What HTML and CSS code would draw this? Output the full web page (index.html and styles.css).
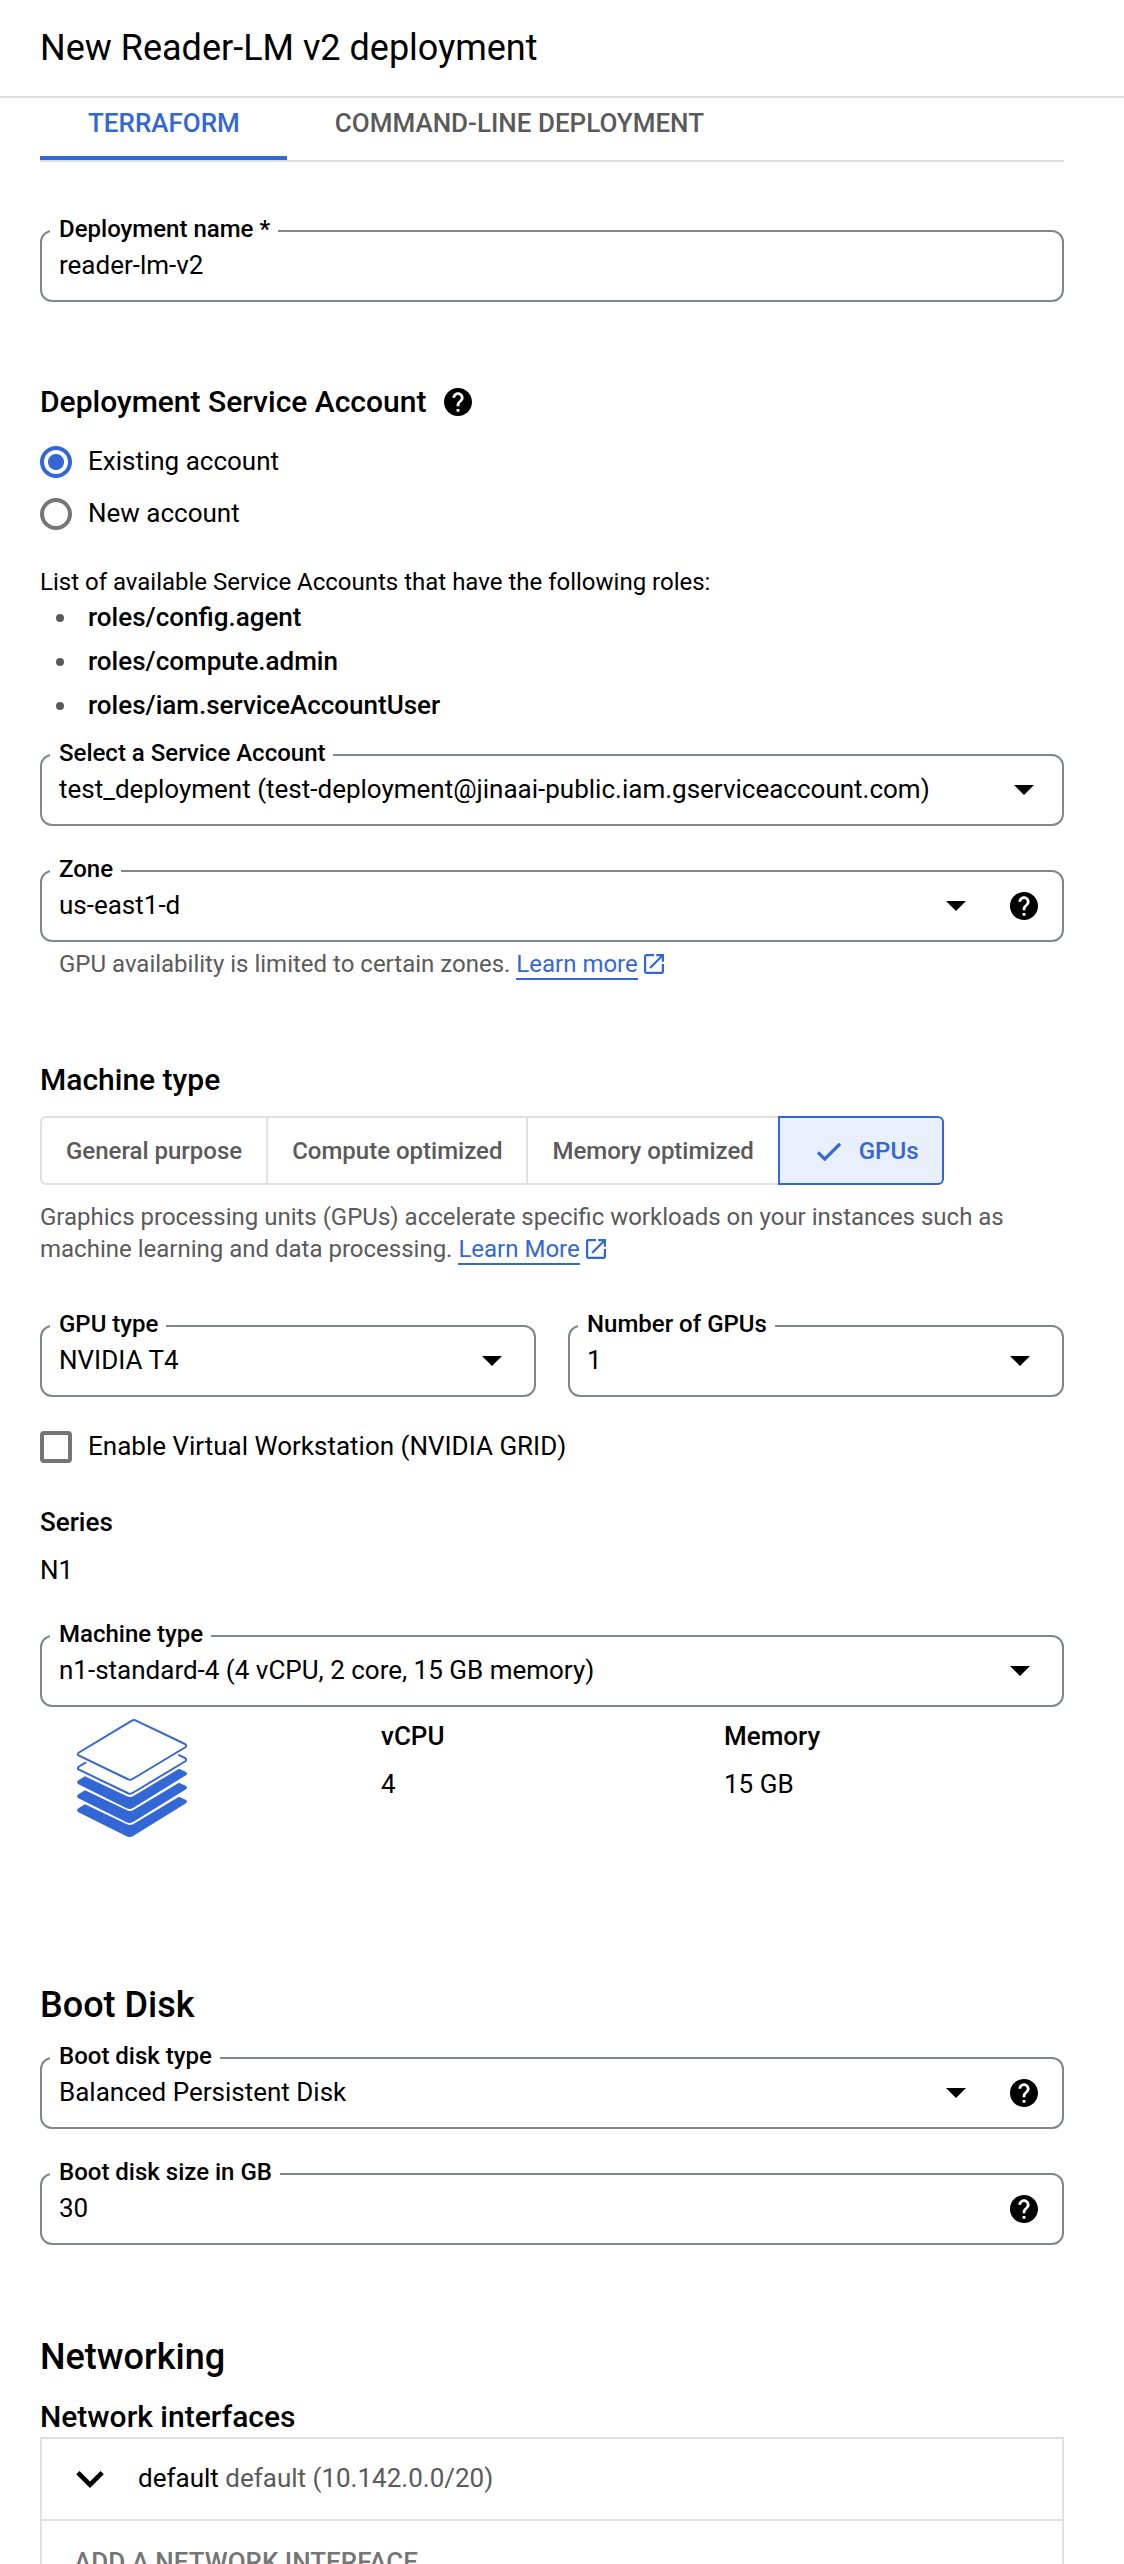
FILE: index.html
```
<!DOCTYPE html>
<html lang="en">
<head>
<meta charset="utf-8">
<title>New Reader-LM v2 deployment</title>
<link rel="stylesheet" href="styles.css">
</head>
<body>
<svg class="defs" aria-hidden="true">
  <symbol id="help" viewBox="2 2 20 20"><path d="M12 2C6.48 2 2 6.48 2 12s4.48 10 10 10 10-4.48 10-10S17.52 2 12 2zm1 17h-2v-2h2v2zm2.07-7.75l-.9.92C13.45 12.9 13 13.5 13 15h-2v-.5c0-1.1.45-2.1 1.17-2.83l1.24-1.26c.37-.36.59-.86.59-1.41 0-1.1-.9-2-2-2s-2 .9-2 2H8c0-2.21 1.79-4 4-4s4 1.79 4 4c0 .88-.36 1.68-.93 2.25z"/></symbol>
  <symbol id="arrow" viewBox="0 0 20 10"><path d="M0 0h20L10 10z"/></symbol>
  <symbol id="external" viewBox="3 3 18 18"><path d="M19 19H5V5h7V3H5c-1.11 0-2 .9-2 2v14c0 1.1.89 2 2 2h14c1.1 0 2-.9 2-2v-7h-2v7zM14 3v2h3.59l-9.83 9.83 1.41 1.41L19 6.41V10h2V3h-7z"/></symbol>
</svg>

<header class="page-header"><h1>New Reader-LM v2 deployment</h1></header>

<main>
  <nav class="tabs">
    <a class="tab active">TERRAFORM</a>
    <a class="tab">COMMAND-LINE DEPLOYMENT</a>
  </nav>

  <div class="field name-field">
    <span class="label">Deployment name *</span>
    <span class="value">reader-lm-v2</span>
  </div>

  <h3>Deployment Service Account <svg class="help"><use href="#help"/></svg></h3>
  <div class="option"><span class="radio checked"></span><span>Existing account</span></div>
  <div class="option"><span class="radio"></span><span>New account</span></div>

  <p class="roles-intro">List of available Service Accounts that have the following roles:</p>
  <ul class="roles">
    <li>roles/config.agent</li>
    <li>roles/compute.admin</li>
    <li>roles/iam.serviceAccountUser</li>
  </ul>

  <div class="field account-field">
    <span class="label">Select a Service Account</span>
    <span class="value">test_deployment (test-deployment@jinaai-public.iam.gserviceaccount.com)</span>
    <svg class="arrow"><use href="#arrow"/></svg>
  </div>
  <div class="field with-help stacked">
    <span class="label">Zone</span>
    <span class="value">us-east1-d</span>
    <svg class="arrow"><use href="#arrow"/></svg>
    <svg class="help"><use href="#help"/></svg>
  </div>
  <p class="hint field-hint">GPU availability is limited to certain zones. <a>Learn more</a><svg class="external"><use href="#external"/></svg></p>

  <h3>Machine type</h3>
  <div class="toggle">
    <span class="toggle-item">General purpose</span>
    <span class="toggle-item">Compute optimized</span>
    <span class="toggle-item">Memory optimized</span>
    <span class="toggle-item selected"><svg class="check" viewBox="3.41 5.59 17.59 13.41"><path d="M9 16.17L4.83 12l-1.42 1.41L9 19 21 7l-1.41-1.41z"/></svg>GPUs</span>
  </div>
  <p class="hint machine-hint">Graphics processing units (GPUs) accelerate specific workloads on your instances such as machine learning and data processing. <a>Learn More</a><svg class="external"><use href="#external"/></svg></p>

  <div class="gpu-row">
    <div class="field">
      <span class="label">GPU type</span>
      <span class="value">NVIDIA T4</span>
      <svg class="arrow"><use href="#arrow"/></svg>
    </div>
    <div class="field">
      <span class="label">Number of GPUs</span>
      <span class="value">1</span>
      <svg class="arrow"><use href="#arrow"/></svg>
    </div>
  </div>

  <div class="option workstation"><span class="checkbox"></span><span>Enable Virtual Workstation (NVIDIA GRID)</span></div>

  <dl class="spec series"><dt>Series</dt><dd>N1</dd></dl>

  <div class="field machine-field">
    <span class="label">Machine type</span>
    <span class="value">n1-standard-4 (4 vCPU, 2 core, 15 GB memory)</span>
    <svg class="arrow"><use href="#arrow"/></svg>
  </div>
  <div class="machine-specs">
    <svg class="layers" viewBox="0 0 112 120">
      <g fill="none" stroke="#3367d6" stroke-width="2" stroke-linecap="round" stroke-linejoin="round">
        <path d="M55.5 2.8Q58 1.4 60.5 2.8L109 26Q111.400 27.800 109 29.500L56.500 61Q54 62.500 51.500 61L3 37.700Q.8 36.200 3 34.500Z"/>
        <path d="M9.500 44.700L3 48.500Q.8 50.200 3 51.700L51.500 75Q54 76.500 56.500 75L109 43.500Q111.400 41.800 109 40L103 37.200"/>
      </g>
      <g fill="#3367d6">
        <path id="slab" d="M9 58.300L51 78.300Q54 79.500 57 78.300L103 50.700L109.600 53.800Q112.400 55.300 109.600 57.400L57.500 89.700Q54 92 50.500 90.200L2.400 66.300Q-.2 64.300 2.400 62.300Z"/>
        <use href="#slab" y="14"/>
        <use href="#slab" y="28"/>
      </g>
    </svg>
    <dl class="spec"><dt>vCPU</dt><dd>4</dd></dl>
    <dl class="spec"><dt>Memory</dt><dd>15 GB</dd></dl>
  </div>

  <h2 class="boot-title">Boot Disk</h2>
  <div class="field with-help boot-field">
    <span class="label">Boot disk type</span>
    <span class="value">Balanced Persistent Disk</span>
    <svg class="arrow"><use href="#arrow"/></svg>
    <svg class="help"><use href="#help"/></svg>
  </div>
  <div class="field with-help stacked">
    <span class="label">Boot disk size in GB</span>
    <span class="value">30</span>
    <svg class="help"><use href="#help"/></svg>
  </div>

  <h2 class="network-title">Networking</h2>
  <h3 class="interfaces-title">Network interfaces</h3>
  <div class="interfaces">
    <div class="interface">
      <svg class="chevron" viewBox="6 8.590 12 7.410"><path d="M16.590 8.590L12 13.170 7.410 8.590 6 10l6 6 6-6z"/></svg>
      <span class="interface-name">default <span class="muted">default (10.142.0.0/20)</span></span>
    </div>
    <div class="add-interface">ADD A NETWORK INTERFACE</div>
  </div>
</main>
</body>
</html>
```
FILE: styles.css
```
* { box-sizing: border-box; }

body {
  margin: 0;
  height: 2564px;
  overflow: hidden;
  background: #fff;
  color: #000;
  font-family: Roboto, sans-serif;
  font-size: 26px;
}

h1, h2, h3, p, ul, dl, dd { margin: 0; padding: 0; }
svg { display: block; flex: none; }
.defs { display: none; }

.page-header {
  height: 98px;
  padding-left: 40px;
  border-bottom: 2px solid #e0e0e0;
}
h1 { font-size: 36px; font-weight: 400; line-height: 96px; }
h2 { font-size: 36px; font-weight: 500; line-height: 44px; }
h3 {
  display: flex;
  align-items: center;
  gap: 18px;
  margin-top: 82px;
  font-size: 30px;
  font-weight: 500;
  line-height: 36px;
}

main { padding: 0 60px 0 40px; }

/* Tabs */
.tabs { display: flex; height: 64px; border-bottom: 2px solid #e0e0e0; }
.tab {
  padding: 0 48px;
  border-bottom: 4px solid transparent;
  color: #5a5a5a;
  font-weight: 500;
  line-height: 50px;
}
.tab.active { padding-right: 47px; border-color: #3367d6; color: #3367d6; }

/* Outlined form fields */
.field {
  position: relative;
  display: flex;
  align-items: center;
  height: 72px;
  padding: 0 32px 0 17px;
  border: 2px solid #80868b;
  border-radius: 12px;
}
.label {
  position: absolute;
  top: -17px;
  left: 8px;
  padding: 0 8px 0 9px;
  background: #fff;
  font-size: 24px;
  font-weight: 500;
  line-height: 28px;
}
.value { flex: 1; align-self: flex-start; line-height: 66px; white-space: nowrap; }
.arrow { width: 20px; height: 10px; }
.help { width: 28px; height: 28px; }
.with-help { gap: 44px; padding-right: 24px; }
.name-field { margin-top: 68px; }
.account-field { margin-top: 27px; padding-right: 28px; }
.stacked { margin-top: 44px; }
.boot-field { margin-top: 30px; }
.machine-field { margin-top: 49px; }

/* Radios and checkbox */
.option { display: flex; gap: 16px; height: 32px; margin-top: 20px; line-height: 30px; }
h3 + .option { margin-top: 26px; }
.radio, .checkbox { width: 32px; height: 32px; border: 4px solid #757575; }
.radio { border-radius: 50%; }
.radio.checked {
  border-color: #3367d6;
  background: radial-gradient(circle, #3367d6 7.500px, #fff 8.500px);
}
.checkbox { border-radius: 4px; }
.workstation { margin-top: 34px; }

/* Required roles */
.roles-intro { margin-top: 39px; font-size: 24px; line-height: 26px; }
.roles { list-style: none; }
.roles li {
  display: flex;
  align-items: center;
  gap: 24px;
  padding-left: 16px;
  font-weight: 500;
  line-height: 44px;
}
.roles li::before {
  content: "";
  width: 8px;
  height: 8px;
  margin-top: 2px;
  border-radius: 50%;
  background: #5a5a5a;
}

/* Helper text */
.hint { color: #5a5a5a; font-size: 24px; line-height: 32px; }
.hint a { border-bottom: 2px solid #3367d6; color: #3367d6; }
.field-hint { margin-top: 6px; padding-left: 19px; }
.machine-hint { margin-top: 16px; }
.external {
  display: inline-block;
  width: 20px;
  height: 20px;
  margin-left: 6px;
  vertical-align: -2px;
  fill: #3367d6;
}

/* Machine family toggle */
.toggle { display: flex; margin-top: 18px; }
.toggle-item {
  display: flex;
  align-items: center;
  height: 69px;
  padding: 0 24px;
  border: 2px solid #e0e0e0;
  color: #5a5a5a;
  font-size: 24px;
  font-weight: 500;
}
.toggle-item + .toggle-item { margin-left: -2px; }
.toggle-item:first-child { border-radius: 6px 0 0 6px; }
.toggle-item.selected {
  border-color: #3367d6;
  border-radius: 0 6px 6px 0;
  background: #e9effb;
  color: #3367d6;
}
.check {
  width: 24px;
  height: 18px;
  margin: 2px 18px 0 13px;
  overflow: visible;
  fill: #3367d6;
  stroke: #3367d6;
  stroke-width: .5;
}

.gpu-row { display: grid; grid-template-columns: 1fr 1fr; gap: 32px; margin-top: 60px; }

/* Machine specs */
.spec { line-height: 32px; }
.spec dt { font-weight: 500; }
.spec dd { margin-top: 16px; }
.series { margin-top: 43px; }
.machine-specs {
  display: grid;
  grid-template-columns: 341px 343px 1fr;
  height: 118px;
  margin-top: 13px;
}
.layers { width: 112px; height: 120px; margin: -2px 0 0 36px; }

.boot-title { margin-top: 145px; }
.network-title { margin-top: 90px; }
.interfaces-title { margin-top: 20px; }

/* Network interface list */
.interfaces { margin-top: 2px; border: 2px solid #e0e0e0; }
.interface {
  display: flex;
  align-items: center;
  gap: 34px;
  height: 82px;
  padding-left: 34px;
  border-bottom: 2px solid #e0e0e0;
}
.interface-name { align-self: flex-start; line-height: 78px; }
.muted { color: #5a5a5a; }
.chevron { width: 28px; height: 17px; }
.add-interface { padding-left: 32px; color: #757575; font-weight: 500; line-height: 82px; }
```
